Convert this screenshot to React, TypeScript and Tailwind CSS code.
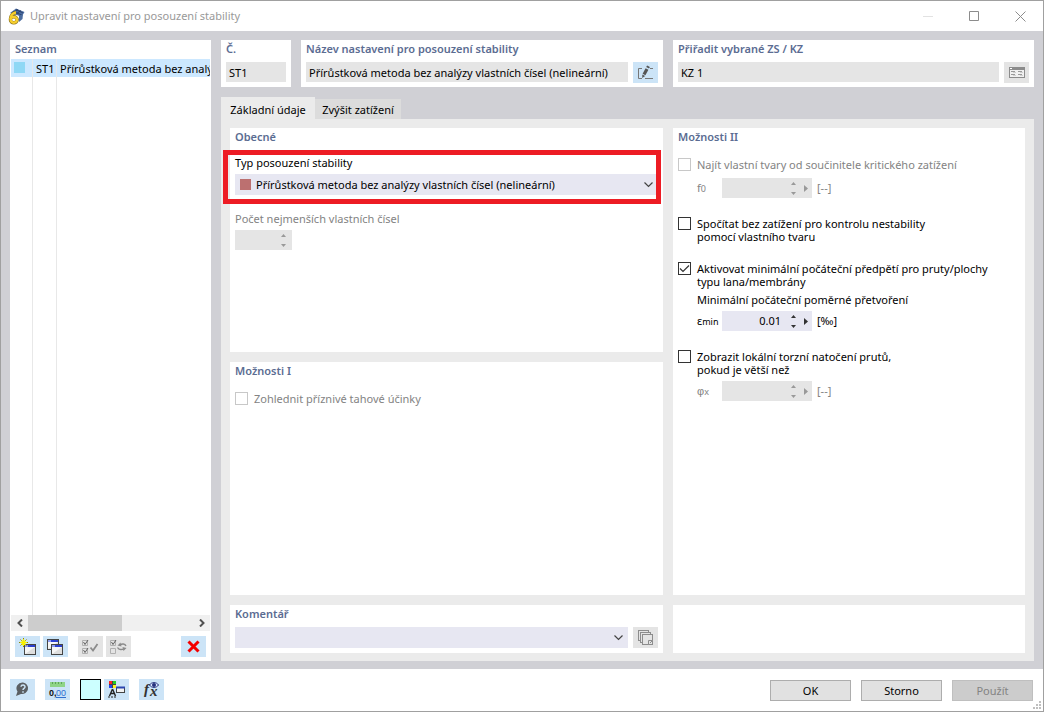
import React, { useState } from 'react';
import clsx from 'clsx';

type PanelProps = {
  title?: string;
  className?: string;
  children?: React.ReactNode;
};

function Panel({ title, className, children }: PanelProps) {
  return (
    <section className={clsx('bg-white min-w-0 px-[5px] pb-1', className)}>
      {title && <h2 className="h-[22px] pt-px leading-4 font-semibold text-[#5b6c92]">{title}</h2>}
      {children}
    </section>
  );
}

type IconButtonProps = {
  label: string;
  disabled?: boolean;
  children: React.ReactNode;
};

function IconButton({ label, disabled, children }: IconButtonProps) {
  return (
    <button
      type="button"
      aria-label={label}
      disabled={disabled}
      className={clsx(
        'w-[25px] h-[21px] shrink-0 flex items-center justify-center',
        disabled ? 'bg-[#e4e4e4]' : 'bg-[#cce4f7]'
      )}
    >
      {children}
    </button>
  );
}

type SpinProps = {
  id: string;
  value?: string;
  disabled?: boolean;
  menu?: boolean;
};

function Spin({ id, value = '', disabled, menu }: SpinProps) {
  const color = disabled ? 'text-[#999999]' : 'text-[#333333]';
  return (
    <div
      className={clsx(
        'h-5 flex items-stretch shrink-0',
        menu ? 'w-[90px]' : 'w-[57px]',
        disabled ? 'bg-[#e5e5e5]' : 'bg-[#e7e7f2]'
      )}
    >
      <input id={id} type="text" defaultValue={value} disabled={disabled} className="flex-1 min-w-0 pr-0.5 text-right bg-transparent outline-none" />
      <div className={clsx('flex flex-col', menu ? 'w-[21px]' : 'w-[17px]', color)}>
        <button type="button" aria-label="Zvýšit" disabled={disabled} className="flex-1 flex items-center justify-center">
          <svg width="5" height="3" viewBox="0 0 5 3"><path d="M0 3L2.5 0L5 3Z" fill="currentColor" /></svg>
        </button>
        <button type="button" aria-label="Snížit" disabled={disabled} className="flex-1 flex items-center justify-center">
          <svg width="5" height="3" viewBox="0 0 5 3"><path d="M0 0L2.5 3L5 0Z" fill="currentColor" /></svg>
        </button>
      </div>
      {menu && (
        <button type="button" aria-label="Další" disabled={disabled} className={clsx('w-2 flex items-center', color)}>
          <svg width="4" height="7" viewBox="0 0 4 7"><path d="M0 0L4 3.5L0 7Z" fill="currentColor" /></svg>
        </button>
      )}
    </div>
  );
}

type CheckProps = {
  label: React.ReactNode;
  checked?: boolean;
  disabled?: boolean;
};

function Check({ label, checked = false, disabled }: CheckProps) {
  const [on, setOn] = useState(checked);
  return (
    <label className={clsx('flex items-start gap-1.5 leading-[13px]', disabled && 'text-[#838383]')}>
      <span className="grid shrink-0">
        <input
          type="checkbox"
          checked={on}
          disabled={disabled}
          onChange={(e) => setOn(e.target.checked)}
          className={clsx(
            'appearance-none size-[13px] border bg-white col-start-1 row-start-1',
            disabled ? 'border-[#c8c8c8]' : 'border-[#333333]'
          )}
        />
        {on && (
          <svg width="13" height="13" viewBox="0 0 13 13" className="col-start-1 row-start-1 pointer-events-none">
            <path d="M2 6.5L5 9.5L11 3.5" fill="none" stroke="#333" strokeWidth="1.2" />
          </svg>
        )}
      </span>
      <span>{label}</span>
    </label>
  );
}

function Select({ id, label, options, swatch }: { id: string; label?: string; options: string[]; swatch?: boolean }) {
  return (
    <div className="grid flex-1 min-w-0 h-[21px] items-center bg-[#e7e7f2]">
      <select
        id={id}
        aria-label={label}
        className={clsx('appearance-none w-full h-[21px] bg-transparent outline-none col-start-1 row-start-1', swatch ? 'pl-[21px]' : 'pl-1')}
      >
        {options.map((o) => (
          <option key={o}>{o}</option>
        ))}
      </select>
      {swatch && <span className="size-[11px] ml-[5px] bg-[#bc7070] col-start-1 row-start-1 pointer-events-none" />}
      <svg width="9" height="6" viewBox="0 0 9 6" className="col-start-1 row-start-1 justify-self-end mr-[5px] pointer-events-none">
        <path d="M0.5 0.5L4.5 4.5L8.5 0.5" fill="none" stroke="#444" strokeWidth="1.2" />
      </svg>
    </div>
  );
}

function AppIcon() {
  return (
    <svg width="17" height="17" viewBox="0 0 17 17">
      <path d="M2 5L8 0.5L16.5 4L13.5 9L9 7Z" fill="#4a6ba3" />
      <path d="M5 3.5L14 7M8 1.5L15 5M4 5L10 1.5M8 6L13 2.5" stroke="#263b60" strokeWidth="0.8" />
      <path d="M11 8L15 6L14.5 11L11 14Z" fill="#4c6da0" />
      <path d="M8 4.5C4.5 5 2.5 8 2.5 11" fill="none" stroke="#8a7220" strokeWidth="3.4" />
      <ellipse cx="5.8" cy="11.8" rx="3.4" ry="3" fill="none" stroke="#8a7220" strokeWidth="3.4" />
      <path d="M8 4.5C4.5 5 2.5 8 2.5 11" fill="none" stroke="#f7cf2e" strokeWidth="2.4" />
      <ellipse cx="5.8" cy="11.8" rx="3.2" ry="2.9" fill="none" stroke="#f7cf2e" strokeWidth="2.4" />
    </svg>
  );
}

function WindowShape({ x, y }: { x: number; y: number }) {
  return (
    <g transform={`translate(${x} ${y})`}>
      <rect x="0.5" y="0.5" width="11" height="10" fill="#dedede" stroke="#444" />
      <path d="M1 3H11L1 10Z" fill="#f6f6f6" />
      <rect x="1" y="1" width="10" height="2" fill="#2b3fd0" />
      <rect x="1" y="1" width="3" height="2" fill="#8f9cf0" />
    </g>
  );
}

function NewIcon() {
  return (
    <svg width="17" height="17" viewBox="0 0 17 17">
      <WindowShape x={5} y={6} />
      <path d="M4.5 0V9M0 4.5H9M1.5 1.5L7.5 7.5M7.5 1.5L1.5 7.5" stroke="#8a8a00" strokeWidth="1" />
      <path d="M4.5 1V8M1 4.5H8M2.5 2.5L6.5 6.5M6.5 2.5L2.5 6.5" stroke="#f8f000" strokeWidth="1.2" />
    </svg>
  );
}

function CopyIcon() {
  return (
    <svg width="17" height="17" viewBox="0 0 17 17">
      <WindowShape x={0} y={1} />
      <WindowShape x={4} y={6} />
    </svg>
  );
}

function ChecksIcon({ mode }: { mode: 'accept' | 'swap' }) {
  return (
    <svg width="17" height="15" viewBox="0 0 17 15" fill="none" stroke="#b0b0b0">
      <path d="M0.5 1.5H5.5V6.5H0.5ZM0.5 9.5H5.5V14.5H0.5Z" />
      <path d="M1.5 3L3 5.5L6 1" stroke="#606060" />
      {mode === 'accept' ? (
        <>
          <path d="M1.5 11L3 13.5L6 9" stroke="#606060" />
          <path d="M8.5 8.5L11 11.5L15.5 5" stroke="#8b8b8b" strokeWidth="1.8" />
        </>
      ) : (
        <>
          <path d="M16 7C15 4.5 12 4.5 10 6M7.5 8.5C9 11 12 11 14 9.5" stroke="#8b8b8b" strokeWidth="1.4" />
          <path d="M7.5 6.5L11.5 7.5L10.5 3.5ZM16.5 9L12.5 8L13.5 12Z" fill="#8b8b8b" stroke="none" />
        </>
      )}
    </svg>
  );
}

function DeleteIcon() {
  return (
    <svg width="13" height="13" viewBox="0 0 13 13">
      <path d="M1.5 1.5L11.5 11.5M11.5 1.5L1.5 11.5" stroke="#f40000" strokeWidth="3" />
    </svg>
  );
}

function EditIcon() {
  return (
    <svg width="15" height="15" viewBox="0 0 15 15" fill="none" stroke="#777777">
      <path d="M4 3.5H0.5V13.5H4M7 13.5H15M12 3.5H15" />
      <path d="M6 9.5L9 4" stroke="#555" strokeWidth="3.2" />
      <path d="M9.6 2.8L10.5 1.2" stroke="#555" strokeWidth="3.2" />
      <path d="M4.3 9.5L7.2 11L4.2 13Z" fill="#555" stroke="none" />
    </svg>
  );
}

function TableIcon() {
  return (
    <svg width="16" height="11" viewBox="0 0 16 11">
      <rect x="0.5" y="0.5" width="15" height="10" fill="#f1f1f1" stroke="#8c8c8c" />
      <rect x="0" y="0" width="16" height="3" fill="#8c8c8c" />
      <path d="M1 1.5H3" stroke="#fff" />
      <path d="M2 4.5H6M9 4.5H13M2 7.5H6M9 7.5H13" stroke="#9a9a9a" />
      <path d="M4 5.5H7M11 5.5H14M4 8.5H7M11 8.5H14" stroke="#d0d0d0" />
    </svg>
  );
}

function PagesIcon() {
  return (
    <svg width="15" height="15" viewBox="0 0 15 15" fill="#e4e4e4" stroke="#8c8c8c">
      <rect x="0.5" y="0.5" width="10" height="10" />
      <rect x="2.5" y="2.5" width="10" height="10" />
      <rect x="4.5" y="4.5" width="10" height="10" />
      <path d="M10.5 14.5V10.5H14.5M12 13L14 11" />
    </svg>
  );
}

function HelpIcon() {
  return (
    <svg width="15" height="15" viewBox="0 0 15 15">
      <path d="M8 0.5A6 5.8 0 1 1 6 12L1 14L2.5 9.5A6 5.8 0 0 1 8 0.5Z" fill="#5b5f63" />
      <path d="M6 4.8C6.2 2.5 10.2 2.5 10 5C9.8 6.5 8 6.3 8 8M8 9.2V10.8" fill="none" stroke="#cce4f7" strokeWidth="1.5" />
    </svg>
  );
}

function UnitsIcon() {
  return (
    <svg width="19" height="17" viewBox="0 0 19 17">
      <rect x="2" y="1" width="15" height="5" fill="#8fd486" />
      <path d="M4.5 1V3M7.5 1V3M10.5 1V3M13.5 1V3" stroke="#5fa55a" />
      <text x="1" y="15" fontFamily="Liberation Sans, sans-serif" fontSize="9" fontWeight="700" fill="#111">0,</text>
      <text x="8" y="15" fontFamily="Liberation Sans, sans-serif" fontSize="9" fill="#2f6fd0">00</text>
      <path d="M8 16.5H18" stroke="#2f6fd0" />
    </svg>
  );
}

function DisplayIcon() {
  return (
    <svg width="17" height="17" viewBox="0 0 17 17">
      <rect x="1" y="0" width="7" height="7" fill="#444" />
      <rect x="1" y="0" width="3" height="3" fill="#f22" />
      <rect x="5" y="0" width="3" height="3" fill="#2c2" />
      <rect x="1" y="4" width="3" height="3" fill="#24e" />
      <rect x="5" y="4" width="3" height="3" fill="#fe2" />
      <path d="M4.5 8L1.5 15M4.5 8L7.5 15M2.5 12.5H6.5" stroke="#222" strokeWidth="1.4" />
      <path d="M0 16H9" stroke="#222" strokeDasharray="2 1" />
      <rect x="8.5" y="6.5" width="8" height="5" fill="#f1f1f1" stroke="#444" />
      <path d="M8 6.5H17" stroke="#2b46b0" strokeWidth="2" />
    </svg>
  );
}

function FormulaIcon() {
  return (
    <svg width="17" height="17" viewBox="0 0 17 17">
      <text x="1" y="13" fontFamily="Liberation Serif, serif" fontStyle="italic" fontWeight="700" fontSize="15" fill="#333">f</text>
      <text x="7" y="15" fontFamily="Liberation Serif, serif" fontStyle="italic" fontWeight="700" fontSize="15" fill="#333">x</text>
      <path d="M6.5 4C8.5 0.8 13.5 0.8 15.5 4C13.5 7.2 8.5 7.2 6.5 4Z" fill="#dbe7ff" stroke="#26317c" />
      <circle cx="11" cy="4" r="2" fill="#26317c" />
    </svg>
  );
}

const METHOD = 'Přírůstková metoda bez analýzy vlastních čísel (nelineární)';

const footerButton = 'w-[81px] h-[21px] border border-[#adadad] bg-[#e1e1e1]';

export default function App() {
  const [tab, setTab] = useState(0);

  return (
    <div className="h-screen min-h-[500px] flex flex-col border border-[#a0a0a0] bg-white text-black text-[11px] leading-4 font-['Noto_Sans',sans-serif]">
      {/* Title bar */}
      <header className="h-[30px] shrink-0 flex items-center pl-[7px] pr-[17px]">
        <AppIcon />
        <h1 className="ml-[5px] text-[#999999]">Upravit nastavení pro posouzení stability</h1>
        <div className="ml-auto flex gap-[35px] text-[#8c8c8c]">
          <button type="button" aria-label="Minimalizovat" className="text-[#e2e2e2]">
            <svg width="11" height="11" viewBox="0 0 11 11"><path d="M0 5.5H10" stroke="currentColor" /></svg>
          </button>
          <button type="button" aria-label="Maximalizovat">
            <svg width="11" height="11" viewBox="0 0 11 11"><path d="M0.5 0.5H9.5V9.5H0.5Z" fill="none" stroke="currentColor" /></svg>
          </button>
          <button type="button" aria-label="Zavřít">
            <svg width="11" height="11" viewBox="0 0 11 11"><path d="M0.5 0.5L10.5 10.5M10.5 0.5L0.5 10.5" stroke="currentColor" /></svg>
          </button>
        </div>
      </header>

      <main className="flex-1 min-h-0 flex gap-2.5 bg-[#d0d0d5] pt-[9px] pb-2 px-[9px]">
        {/* List */}
        <section className="w-[201px] shrink-0 bg-white flex flex-col">
          <h2 className="h-[19px] pl-[5px] pt-px leading-4 font-semibold text-[#5b6c92]">Seznam</h2>
          <div className="flex-1 mx-px flex flex-col overflow-hidden">
            <button type="button" className="h-[18px] w-full shrink-0 flex items-stretch bg-[#cce8ff] text-left whitespace-nowrap leading-5 overflow-hidden">
              <span className="w-[22px] shrink-0 border-r border-[#e8e8e8] pl-[3px] pt-[3px]">
                <span className="block size-[11px] bg-[#8fd8f5]" />
              </span>
              <span className="w-6 shrink-0 border-r border-[#e8e8e8] pl-[3px]">ST1</span>
              <span className="pl-[3px]">{METHOD}</span>
            </button>
            <div className="flex-1 flex">
              <div className="w-[22px] border-r border-[#e8e8e8]" />
              <div className="w-6 border-r border-[#e8e8e8]" />
            </div>
          </div>
          <div className="h-4 mx-px bg-[#f0f0f0] flex items-stretch">
            <button type="button" aria-label="Posunout vlevo" className="w-[17px] flex items-center justify-center">
              <svg width="6" height="8" viewBox="0 0 6 8"><path d="M5 0.5L1.5 4L5 7.5" fill="none" stroke="#505050" strokeWidth="2" /></svg>
            </button>
            <div className="flex-1"><div className="w-[57%] h-full bg-[#cdcdcd]" /></div>
            <button type="button" aria-label="Posunout vpravo" className="w-[17px] flex items-center justify-center">
              <svg width="6" height="8" viewBox="0 0 6 8"><path d="M1 0.5L4.5 4L1 7.5" fill="none" stroke="#505050" strokeWidth="2" /></svg>
            </button>
          </div>
          <div className="flex gap-[3px] px-[5px] pt-[5px] pb-1">
            <IconButton label="Nový"><NewIcon /></IconButton>
            <IconButton label="Kopírovat"><CopyIcon /></IconButton>
            <div className="flex gap-[3px] ml-[7px]">
              <IconButton label="Vybrat vše" disabled><ChecksIcon mode="accept" /></IconButton>
              <IconButton label="Obrátit výběr" disabled><ChecksIcon mode="swap" /></IconButton>
            </div>
            <div className="ml-auto">
              <IconButton label="Smazat"><DeleteIcon /></IconButton>
            </div>
          </div>
        </section>

        <div className="flex-1 min-w-0 flex flex-col">
          <div className="grid grid-cols-[70px_362fr_361fr] gap-2.5">
            <Panel title="Č.">
              <input aria-label="Č." readOnly value="ST1" className="block w-full h-5 px-[3px] bg-[#e5e5e5] outline-none" />
            </Panel>
            <Panel title="Název nastavení pro posouzení stability">
              <div className="flex gap-[5px]">
                <input aria-label="Název nastavení" readOnly value={METHOD} className="flex-1 min-w-0 h-5 px-[3px] bg-[#e5e5e5] outline-none" />
                <IconButton label="Upravit název"><EditIcon /></IconButton>
              </div>
            </Panel>
            <Panel title="Přiřadit vybrané ZS / KZ">
              <div className="flex gap-[5px]">
                <input aria-label="Přiřadit vybrané ZS / KZ" readOnly value="KZ 1" className="flex-1 min-w-0 h-5 px-[3px] bg-[#e5e5e5] outline-none" />
                <IconButton label="Vybrat" disabled><TableIcon /></IconButton>
              </div>
            </Panel>
          </div>

          <div role="tablist" className="flex items-end mt-2.5">
            {['Základní údaje', 'Zvýšit zatížení'].map((name, i) => (
              <button
                key={name}
                type="button"
                role="tab"
                aria-selected={tab === i}
                onClick={() => setTab(i)}
                className={clsx(
                  'whitespace-nowrap',
                  i === 0 ? 'w-[94px]' : 'w-[86px]',
                  tab === i ? 'h-[22px] pt-1 bg-[#ebebeb]' : 'h-5 pt-0.5 bg-[#dcdcdc]'
                )}
              >
                {name}
              </button>
            ))}
          </div>

          <div className="flex-1 min-h-0 bg-[#ebebeb] pt-[9px] pb-2 px-[9px] grid grid-cols-[433fr_352fr] grid-rows-[1fr_48px] gap-2.5">
            <div className="min-w-0 flex flex-col gap-2.5">
              <Panel title="Obecné" className="relative flex-[224_1_0%]">
                <label htmlFor="type" className="block mt-[5px]">Typ posouzení stability</label>
                <div className="flex mt-[3px]">
                  <Select id="type" swatch options={[METHOD]} />
                </div>
                <label htmlFor="count" className="block mt-4 mb-[3px] text-[#838383]">Počet nejmenších vlastních čísel</label>
                <Spin id="count" disabled />
                {/* highlight over the type selection */}
                <div className="absolute -left-[7px] right-0.5 top-[22px] h-[54px] border-[5px] border-[#ed1c24] pointer-events-none" />
              </Panel>
              <Panel title="Možnosti I" className="flex-[233_1_0%]">
                <div className="mt-2">
                  <Check disabled label="Zohlednit příznivé tahové účinky" />
                </div>
              </Panel>
            </div>

            <Panel title="Možnosti II">
              <div className="mt-2">
                <Check disabled label="Najít vlastní tvary od součinitele kritického zatížení" />
              </div>
              <div className="flex items-center pl-[19px] mt-[7px] text-[#838383]">
                <label htmlFor="f0" className="w-[25px]">f<span className="text-[9px]">0</span></label>
                <Spin id="f0" disabled menu />
                <span className="ml-[5px]">[--]</span>
              </div>
              <div className="mt-[19px]">
                <Check label={<>Spočítat bez zatížení pro kontrolu nestability<br />pomocí vlastního tvaru</>} />
              </div>
              <div className="mt-[19px]">
                <Check checked label={<>Aktivovat minimální počáteční předpětí pro pruty/plochy<br />typu lana/membrány</>} />
              </div>
              <label htmlFor="eps" className="block pl-[19px] mt-1">Minimální počáteční poměrné přetvoření</label>
              <div className="flex items-center pl-[19px] mt-[3px]">
                <span className="w-[25px] whitespace-nowrap">ε<span className="text-[9px]">min</span></span>
                <Spin id="eps" value="0.01" menu />
                <span className="ml-[5px]">[‰]</span>
              </div>
              <div className="mt-[19px]">
                <Check label={<>Zobrazit lokální torzní natočení prutů,<br />pokud je větší než</>} />
              </div>
              <div className="flex items-center pl-[19px] mt-[5px] text-[#838383]">
                <label htmlFor="phi" className="w-[25px]"><span className="font-['Liberation_Sans',sans-serif]">φ</span><span className="text-[9px]">x</span></label>
                <Spin id="phi" disabled menu />
                <span className="ml-[5px]">[--]</span>
              </div>
            </Panel>

            <Panel title="Komentář">
              <div className="flex gap-[5px]">
                <Select id="comment" label="Komentář" options={['']} />
                <IconButton label="Komentáře" disabled><PagesIcon /></IconButton>
              </div>
            </Panel>
            <Panel />
          </div>
        </div>
      </main>

      {/* Bottom bar */}
      <footer className="relative h-[42px] shrink-0 flex items-start pl-[9px] pr-2.5 pt-2.5">
        <div className="flex gap-2.5">
          <IconButton label="Nápověda"><HelpIcon /></IconButton>
          <IconButton label="Jednotky"><UnitsIcon /></IconButton>
          <div className="flex gap-[3px]">
            <button type="button" aria-label="Barva" className="size-[21px] border border-black bg-[#ccffff]" />
            <IconButton label="Zobrazení"><DisplayIcon /></IconButton>
          </div>
          <IconButton label="Vzorce"><FormulaIcon /></IconButton>
        </div>
        <div className="ml-auto mt-px flex gap-2.5">
          <button type="button" className={footerButton}>OK</button>
          <button type="button" className={footerButton}>Storno</button>
          <button type="button" disabled className="w-[81px] h-[21px] border border-[#bfbfbf] bg-[#cccccc] text-[#838383]">Použít</button>
        </div>
        <svg width="8" height="8" viewBox="0 0 8 8" className="absolute right-0.5 bottom-0.5">
          <path d="M6 0h2v2h-2zM3 3h2v2h-2zM6 3h2v2h-2zM0 6h2v2h-2zM3 6h2v2h-2zM6 6h2v2h-2z" fill="#bfbfbf" />
        </svg>
      </footer>
    </div>
  );
}
